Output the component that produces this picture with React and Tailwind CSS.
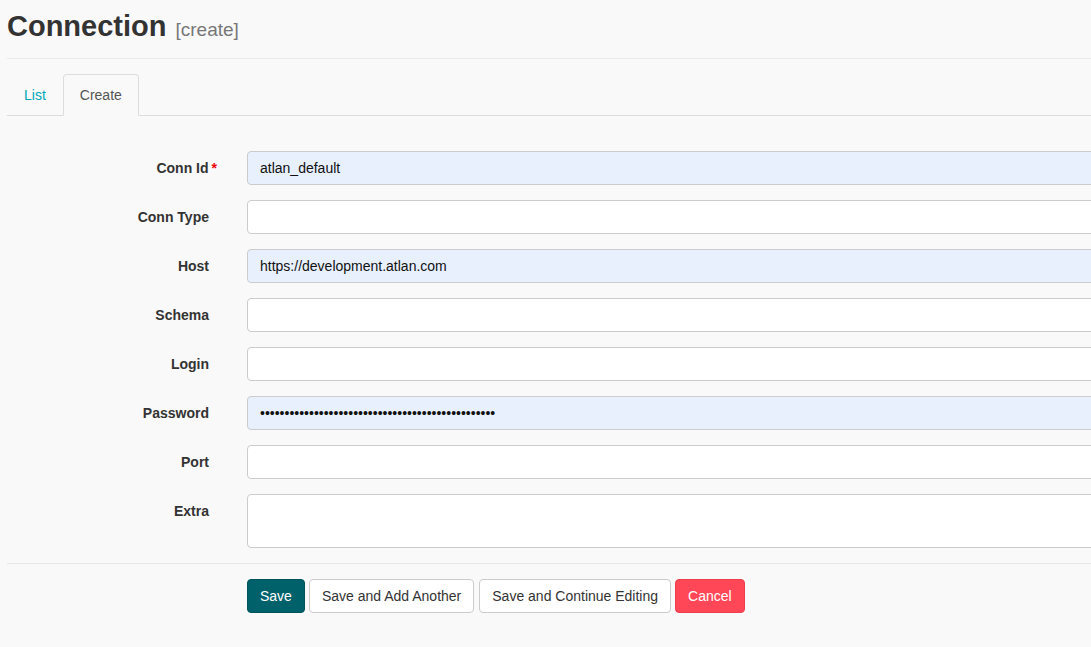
import React from 'react';

const fields = [
  { label: 'Conn Id', required: true, value: 'atlan_default', filled: true },
  { label: 'Conn Type', value: '' },
  { label: 'Host', value: 'https://development.atlan.com', filled: true },
  { label: 'Schema', value: '' },
  { label: 'Login', value: '' },
  { label: 'Password', value: 'x'.repeat(48), filled: true, type: 'password' },
  { label: 'Port', value: '' },
];

const inputCls =
  'h-[34px] w-[900px] rounded-[4px] border border-[#ccc] px-[12px] text-[14px] text-[#111] outline-none';

export default function App() {
  return (
    <div className="min-h-screen w-full overflow-hidden bg-[#f9f9f9] font-['Liberation_Sans',Arial,sans-serif] text-[#333]">
      <div className="w-[1300px] pl-[7px]">
        {/* ── Title ── */}
        <div className="pt-[12px] flex items-baseline">
          <h1 className="text-[29px] leading-[29px] font-bold text-[#333]">Connection</h1>
          <span className="ml-[9px] text-[19px] leading-[29px] text-[#777]">[create]</span>
        </div>
        <div className="mt-[14px] border-t border-[#eaeaea]" />

        {/* ── Tabs ── */}
        <div className="mt-[15px] flex border-b border-[#ddd]">
          <button className="-mb-px h-[42px] border border-transparent px-[16px] text-[14px] leading-[40px] text-[#00a6b7]">
            List
          </button>
          <button className="-mb-px h-[42px] rounded-t-[4px] border border-[#ddd] border-b-transparent bg-[#f9f9f9] px-[16px] text-[14px] leading-[40px] text-[#555]">
            Create
          </button>
        </div>

        {/* ── Form ── */}
        <div className="mt-[35px] flex flex-col gap-[15px]">
          {fields.map(({ label, required, value, filled, type }) => (
            <div key={label} className="flex gap-[38px]">
              <label className="w-[202px] text-right text-[14px] font-bold leading-[34px] text-[#333]">
                {label}
                {required && <span className="-mr-[8px] ml-[3px] text-[#e00]">*</span>}
              </label>
              <input
                type={type || 'text'}
                readOnly
                value={value}
                className={`${inputCls} ${filled ? 'bg-[#e8f0fe]' : 'bg-white'}`}
              />
            </div>
          ))}
          <div className="flex gap-[38px]">
            <label className="w-[202px] text-right text-[14px] font-bold leading-[34px] text-[#333]">
              Extra
            </label>
            <textarea
              readOnly
              className="h-[54px] w-[900px] resize-none rounded-[4px] border border-[#ccc] bg-white px-[12px] py-[6px] text-[14px] outline-none"
            />
          </div>
        </div>

        <div className="mt-[15px] border-t border-[#e8e8e8]" />

        {/* ── Actions ── */}
        <div className="mt-[15px] ml-[240px] flex gap-[4px] pb-[30px]">
          <button className="h-[34px] rounded-[4px] border border-[#00545b] bg-[#00616b] px-[12px] text-[14px] text-white">
            Save
          </button>
          <button className="h-[34px] rounded-[4px] border border-[#ccc] bg-white px-[12px] text-[14px] text-[#333]">
            Save and Add Another
          </button>
          <button className="ml-[1px] h-[34px] rounded-[4px] border border-[#ccc] bg-white px-[12px] text-[14px] text-[#333]">
            Save and Continue Editing
          </button>
          <button className="h-[34px] rounded-[4px] border border-[#f03e4e] bg-[#ff4757] px-[12px] text-[14px] text-white">
            Cancel
          </button>
        </div>
      </div>
    </div>
  );
}
